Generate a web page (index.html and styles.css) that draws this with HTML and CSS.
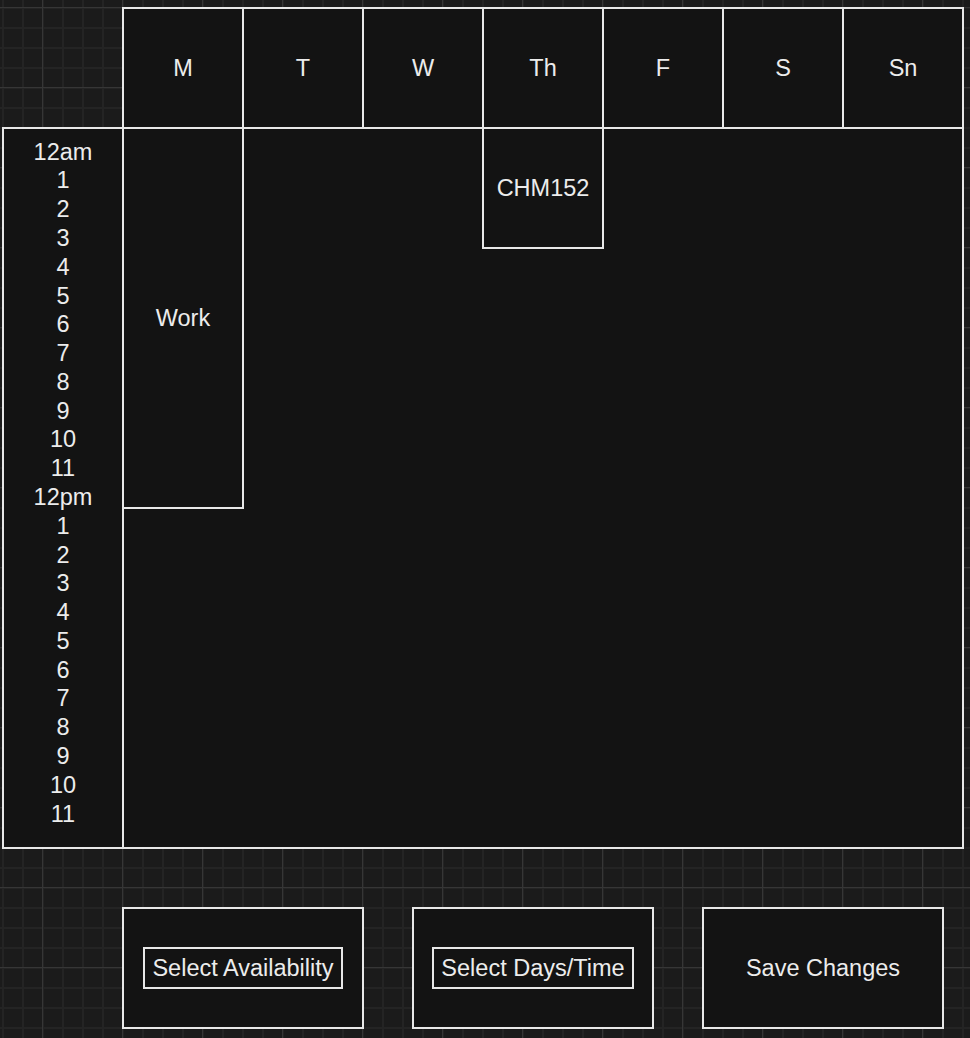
FILE: index.html
```html
<!DOCTYPE html>
<html lang="en">
  <head>
    <meta charset="UTF-8" />
    <meta name="viewport" content="width=device-width, initial-scale=1.0" />
    <title>Weekly Schedule</title>
    <link rel="stylesheet" href="styles.css">
  </head>
  <body>
    <div class="planner">
      <div class="days">
        <div class="day">M</div>
        <div class="day">T</div>
        <div class="day">W</div>
        <div class="day">Th</div>
        <div class="day">F</div>
        <div class="day">S</div>
        <div class="day last">Sn</div>
      </div>

      <div class="calendar">
        <div class="hours">
          <div>12am</div>
          <div>1</div>
          <div>2</div>
          <div>3</div>
          <div>4</div>
          <div>5</div>
          <div>6</div>
          <div>7</div>
          <div>8</div>
          <div>9</div>
          <div>10</div>
          <div>11</div>
          <div>12pm</div>
          <div>1</div>
          <div>2</div>
          <div>3</div>
          <div>4</div>
          <div>5</div>
          <div>6</div>
          <div>7</div>
          <div>8</div>
          <div>9</div>
          <div>10</div>
          <div>11</div>
        </div>
        <div class="event work">Work</div>
        <div class="event chm">CHM152</div>
      </div>

      <div class="actions">
        <button class="action"><span class="action-label">Select Availability</span></button>
        <button class="action"><span class="action-label">Select Days/Time</span></button>
        <button class="action">Save Changes</button>
      </div>
    </div>
  </body>
</html>
```

FILE: styles.css
```css
body {
  margin: 0;
  height: 1038px;
  overflow: hidden;
  font-family: "Liberation Sans", Arial, Helvetica, sans-serif;
  color: #ececec;
  background-color: #1b1b1b;
  background-image:
    linear-gradient(#363636 1px, transparent 1px),
    linear-gradient(90deg, #363636 1px, transparent 1px),
    linear-gradient(#242424 2px, transparent 2px),
    linear-gradient(90deg, #242424 2px, transparent 2px);
  background-size: 80px 80px, 80px 80px, 20px 20px, 20px 20px;
  background-position: 0 7px, 42px 0, 0 7px, 2px 0;
}
.planner {
  padding: 7px 0 0 2px;
  width: 962px;
}
.days {
  display: flex;
  margin-left: 120px;
}
.day {
  box-sizing: border-box;
  width: 120px;
  height: 120px;
  border-top: 2px solid #e8e8e8;
  border-left: 2px solid #e8e8e8;
  background-color: #131313;
  display: flex;
  align-items: center;
  justify-content: center;
  font-size: 23.5px;
}
.day.last {
  width: 122px;
  border-right: 2px solid #e8e8e8;
}
.calendar {
  box-sizing: border-box;
  height: 722px;
  border: 2px solid #e8e8e8;
  background-color: #131313;
  display: grid;
  grid-template-columns: 120px repeat(7, 120px);
  grid-template-rows: 1fr;
}
.hours {
  grid-column: 1;
  grid-row: 1;
  box-sizing: border-box;
  border-right: 2px solid #e8e8e8;
  padding-top: 8.6px;
  text-align: center;
  font-size: 23.5px;
  line-height: 28.78px;
}
.event {
  grid-row: 1;
  align-self: start;
  box-sizing: border-box;
  display: flex;
  align-items: center;
  justify-content: center;
  font-size: 23.5px;
  border-right: 2px solid #e8e8e8;
  border-bottom: 2px solid #e8e8e8;
}
.work {
  grid-column: 2;
  height: 380px;
}
.chm {
  grid-column: 5;
  height: 120px;
  width: 122px;
  margin-left: -2px;
  border-left: 2px solid #e8e8e8;
}
.actions {
  display: flex;
  gap: 48px;
  margin: 58px 0 0 120px;
}
.action {
  box-sizing: border-box;
  width: 242px;
  height: 122px;
  border: 2px solid #e8e8e8;
  background-color: #131313;
  color: #ececec;
  font-family: inherit;
  font-size: 23.5px;
  padding: 0;
  display: flex;
  align-items: center;
  justify-content: center;
}
.action-label {
  border: 2px solid #e8e8e8;
  padding: 5px 7px;
  line-height: 28px;
}
```
